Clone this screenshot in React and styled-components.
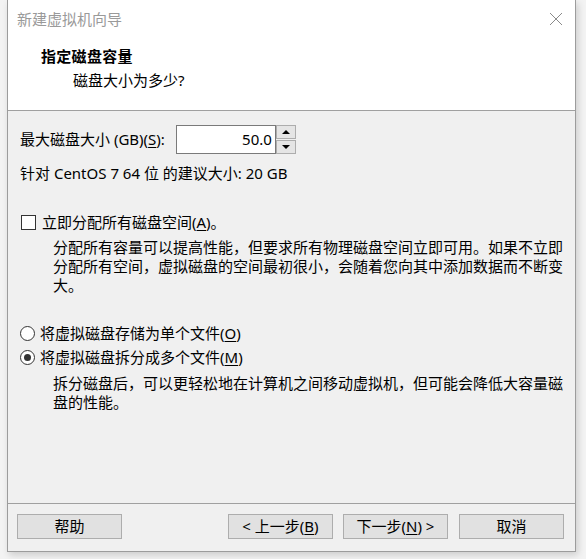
import React from "react";
import styled, { createGlobalStyle } from "styled-components";

const Global = createGlobalStyle`
  html, body { margin: 0; padding: 0; background: #f3f3f3; }
  body {
    font-family: "Noto Sans", "Noto Sans CJK SC", sans-serif;
    font-size: 15px;
    color: #000;
  }
`;

const Page = styled.div`
  width: 586px;
  height: 559px;
  overflow: hidden;
  padding-left: 7px;
  box-sizing: border-box;
`;

const Window = styled.div`
  width: 569px;
  height: 552px;
  box-sizing: border-box;
  border: 1px solid #9c9c9c;
  border-top: none;
  background: #f0f0f0;
  box-shadow: 2px 3px 7px rgba(0, 0, 0, 0.16);
  display: flex;
  flex-direction: column;
`;

const Header = styled.div`
  background: #fff;
  height: 111px;
  box-sizing: border-box;
  border-bottom: 1px solid #a0a0a0;
`;

const TitleBar = styled.div`
  height: 38px;
  display: flex;
  align-items: center;
  justify-content: space-between;
  padding: 0 12px 0 9px;
  color: #9a9a9a;
  line-height: 20px;
`;

const Close = styled.svg`
  width: 14px;
  height: 14px;
  display: block;
`;

const Heading = styled.div`
  margin: 8px 0 0 33px;
  font-weight: 700;
  line-height: 20px;
  letter-spacing: 0.3px;
`;

const SubHeading = styled.div`
  margin: 4px 0 0 65px;
  line-height: 20px;
`;

const Body = styled.div`
  flex: 1;
  padding: 14px 0 0 12px;
  display: flex;
  flex-direction: column;
`;

const Row = styled.div`
  display: flex;
  align-items: center;
  gap: ${(p) => p.$gap || 6}px;
  line-height: 19px;
  margin-top: ${(p) => p.$mt || 0}px;
`;

const U = styled.span`
  text-decoration: underline;
  text-underline-offset: 2px;
`;

const Spin = styled.div`
  display: flex;
  height: 29px;
`;

const SpinInput = styled.div`
  width: 100px;
  box-sizing: border-box;
  border: 1px solid #7a7a7a;
  background: #fff;
  display: flex;
  align-items: center;
  justify-content: flex-end;
  padding-right: 3px;
`;

const SpinButtons = styled.div`
  width: 20px;
  display: flex;
  flex-direction: column;
  gap: 1px;
`;

const SpinBtn = styled.div`
  flex: 1;
  box-sizing: border-box;
  border: 1px solid #adadad;
  background: #e5e5e5;
  display: flex;
  align-items: center;
  justify-content: center;
`;

const Arrow = styled.div`
  width: 0;
  height: 0;
  border-left: 4px solid transparent;
  border-right: 4px solid transparent;
  ${(p) =>
    p.$down ? "border-top: 4px solid #000;" : "border-bottom: 4px solid #000;"}
`;

const Line = styled.div`
  line-height: 19px;
  margin-top: ${(p) => p.$mt || 0}px;
`;

const Checkbox = styled.div`
  width: 15px;
  height: 15px;
  box-sizing: border-box;
  border: 1px solid #333;
  background: #fff;
  margin-left: 1px;
`;

const Radio = styled.div`
  width: 15px;
  height: 15px;
  box-sizing: border-box;
  border: 1px solid #333;
  border-radius: 50%;
  background: #fff;
  display: flex;
  align-items: center;
  justify-content: center;
  &::after {
    content: "";
    width: 7px;
    height: 7px;
    border-radius: 50%;
    background: ${(p) => (p.$checked ? "#333" : "transparent")};
  }
`;

const Desc = styled.div`
  width: 516px;
  margin: ${(p) => p.$mt || 0}px 0 0 33px;
  line-height: 19px;
`;

const Footer = styled.div`
  border-top: 1px solid #a0a0a0;
  height: 48px;
  box-sizing: border-box;
  padding: 10px 10px 0 9px;
  display: flex;
  align-items: flex-start;
`;

const Button = styled.div`
  width: 105px;
  height: 25px;
  box-sizing: border-box;
  border: 1px solid #adadad;
  background: #e1e1e1;
  display: flex;
  align-items: center;
  justify-content: center;
  line-height: 19px;
  margin-left: ${(p) => p.$ml || 0}px;
`;

export default function App() {
  return (
    <>
      <Global />
      <Page>
        <Window>
          <Header>
            <TitleBar>
              <span>新建虚拟机向导</span>
              <Close viewBox="0 0 14 14">
                <path d="M1 1 L13 13 M13 1 L1 13" stroke="#8a8a8a" strokeWidth="1" fill="none" />
              </Close>
            </TitleBar>
            <Heading>指定磁盘容量</Heading>
            <SubHeading>磁盘大小为多少?</SubHeading>
          </Header>
          <Body>
            <Row $gap={11}>
              <span>
                最大磁盘大小 (GB)(<U>S</U>):
              </span>
              <Spin>
                <SpinInput>50.0</SpinInput>
                <SpinButtons>
                  <SpinBtn>
                    <Arrow />
                  </SpinBtn>
                  <SpinBtn>
                    <Arrow $down />
                  </SpinBtn>
                </SpinButtons>
              </Spin>
            </Row>
            <Line $mt={10}>针对 CentOS 7 64 位 的建议大小: 20 GB</Line>
            <Row $mt={30} $gap={6}>
              <Checkbox />
              <span>
                立即分配所有磁盘空间(<U>A</U>)。
              </span>
            </Row>
            <Desc $mt={6}>
              分配所有容量可以提高性能，但要求所有物理磁盘空间立即可用。如果不立即分配所有空间，虚拟磁盘的空间最初很小，会随着您向其中添加数据而不断变大。
            </Desc>
            <Row $mt={29} $gap={5}>
              <Radio />
              <span>
                将虚拟磁盘存储为单个文件(<U>O</U>)
              </span>
            </Row>
            <Row $mt={5} $gap={5}>
              <Radio $checked />
              <span>
                将虚拟磁盘拆分成多个文件(<U>M</U>)
              </span>
            </Row>
            <Desc $mt={7}>
              拆分磁盘后，可以更轻松地在计算机之间移动虚拟机，但可能会降低大容量磁盘的性能。
            </Desc>
          </Body>
          <Footer>
            <Button>帮助</Button>
            <Button $ml={106}>
              &lt; 上一步(<U>B</U>)
            </Button>
            <Button $ml={10}>
              下一步(<U>N</U>) &gt;
            </Button>
            <Button $ml={11}>取消</Button>
          </Footer>
        </Window>
      </Page>
    </>
  );
}
